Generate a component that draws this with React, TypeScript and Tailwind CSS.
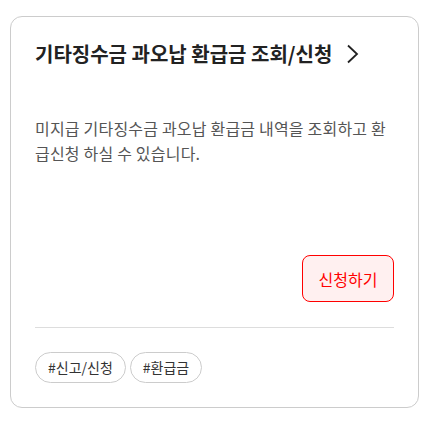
export default function App() {
  return (
    <div
      className="min-h-screen bg-white pt-4 px-[10px] pb-[17px]"
      style={{ fontFamily: '"Noto Sans CJK KR", "Noto Sans", sans-serif' }}
    >
      <div className="h-[392px] border border-[#cccccc] rounded-xl px-6 pt-6 pb-6 flex flex-col">
        <a href="#" className="flex items-center gap-[14px] text-[#222222]">
          <span className="text-[20px] leading-[26px] font-bold">
            기타징수금 과오납 환급금 조회/신청
          </span>
          <svg
            className="w-[13px] h-[20px]"
            viewBox="0 0 13 20"
            fill="none"
            stroke="currentColor"
            strokeWidth={1.8}
          >
            <path d="M2 1.5 L11 10 L2 18.5" />
          </svg>
        </a>

        <p className="mt-[49px] text-[16px] leading-[25px] tracking-[0.2px] text-[#555555] break-all">
          미지급 기타징수금 과오납 환급금 내역을 조회하고 환급신청 하실 수 있습니다.
        </p>

        <div className="mt-auto flex justify-end">
          <button className="w-[92px] h-[47px] rounded-lg border border-[#ff0000] bg-[#fff0f0] text-[16px] text-[#ff0000]">
            신청하기
          </button>
        </div>

        <div className="mt-[25px] border-t border-[#dddddd]" />

        <div className="mt-6 flex gap-1">
          <span className="h-[31px] px-[12px] flex items-center rounded-full border border-[#cccccc] text-[14px] text-[#333333]">
            #신고/신청
          </span>
          <span className="h-[31px] px-[12px] flex items-center rounded-full border border-[#cccccc] text-[14px] text-[#333333]">
            #환급금
          </span>
        </div>
      </div>
    </div>
  );
}
